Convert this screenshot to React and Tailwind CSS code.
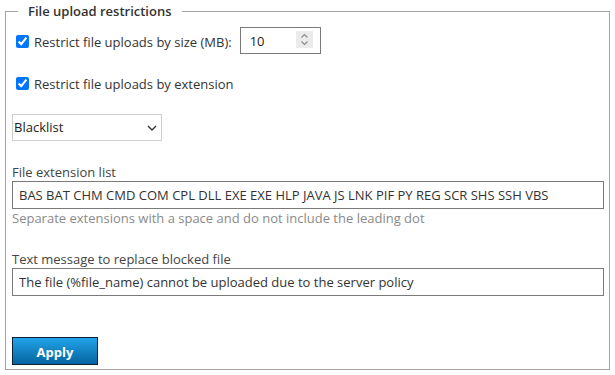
import React from "react";

export default function App() {
  return (
    <div className="w-[615px] h-[375px] bg-white pt-[1px] text-[13px] text-[#333]" style={{ fontFamily: '"Open Sans", "Noto Sans", sans-serif' }}>
      <fieldset className="mx-[5px] border border-[#a3a3a3] pl-[6px] pr-[5px] pb-[3px]">
        <legend className="ml-[6px] px-[10px] font-semibold text-[13px] leading-[20px] text-[#333]">
          File upload restrictions
        </legend>
        <div className="mt-[6px] flex items-center h-[27px]">
          <input type="checkbox" defaultChecked className="ml-[4px] mr-[5px] w-[13px] h-[13px] mt-[1px]" />
          <span className="leading-[18px] mt-[2px]">Restrict file uploads by size (MB):</span>
          <div className="relative ml-[8px] w-[81px] h-[27px]">
            <input
              type="text"
              defaultValue="10"
              className="w-full h-full border border-[#7a7a7a] pl-[9px] text-[13px] text-[#222] outline-none"
            />
            <span className="absolute right-[8px] top-[4px] w-[17px] h-[17px] bg-[#ebebeb] flex items-center justify-center">
              <svg width="9" height="13" viewBox="0 0 9 13" fill="none" stroke="#8a8a8a" strokeWidth="1.1">
                <path d="M1.5 4.5 L4.5 1.5 L7.5 4.5" />
                <path d="M1.5 8.5 L4.5 11.5 L7.5 8.5" />
              </svg>
            </span>
          </div>
        </div>
        <div className="mt-[19px] flex items-center h-[20px]">
          <input type="checkbox" defaultChecked className="ml-[4px] mr-[5px] w-[13px] h-[13px]" />
          <span className="leading-[18px] mt-[1px]">Restrict file uploads by extension</span>
        </div>
        <div className="relative mt-[21px] w-[150px] h-[27px]">
          <select className="appearance-none w-full h-full border border-[#cfcfcf] bg-white pl-[1px] text-[13px] text-[#222] outline-none">
            <option>Blacklist</option>
            <option>Whitelist</option>
          </select>
          <svg className="absolute right-[5px] top-[11px] pointer-events-none" width="10" height="6" viewBox="0 0 10 6" fill="none" stroke="#333" strokeWidth="1.4">
            <path d="M1 1 L5 5 L9 1" />
          </svg>
        </div>
        <div className="mt-[22px] leading-[18px] text-[#444]">File extension list</div>
        <input
          type="text"
          defaultValue="BAS BAT CHM CMD COM CPL DLL EXE EXE HLP JAVA JS LNK PIF PY REG SCR SHS SSH VBS"
          className="block w-full h-[28px] border border-[#7a7a7a] pl-[6px] text-[13px] text-[#333] outline-none"
        />
        <div className="leading-[18px] text-[#8a8a8a]">Separate extensions with a space and do not include the leading dot</div>
        <div className="mt-[23px] leading-[18px] text-[#444]">Text message to replace blocked file</div>
        <input
          type="text"
          defaultValue="The file (%file_name) cannot be uploaded due to the server policy"
          className="block w-full h-[28px] border border-[#7a7a7a] pl-[6px] text-[13px] text-[#333] outline-none"
        />
        <button className="mt-[41px] mb-[1px] block w-[86px] h-[28px] pt-[3px] border border-[#0c2236] bg-gradient-to-b from-[#22a4ea] to-[#0564a0] text-white font-bold text-[13px]">
          Apply
        </button>
      </fieldset>
    </div>
  );
}
